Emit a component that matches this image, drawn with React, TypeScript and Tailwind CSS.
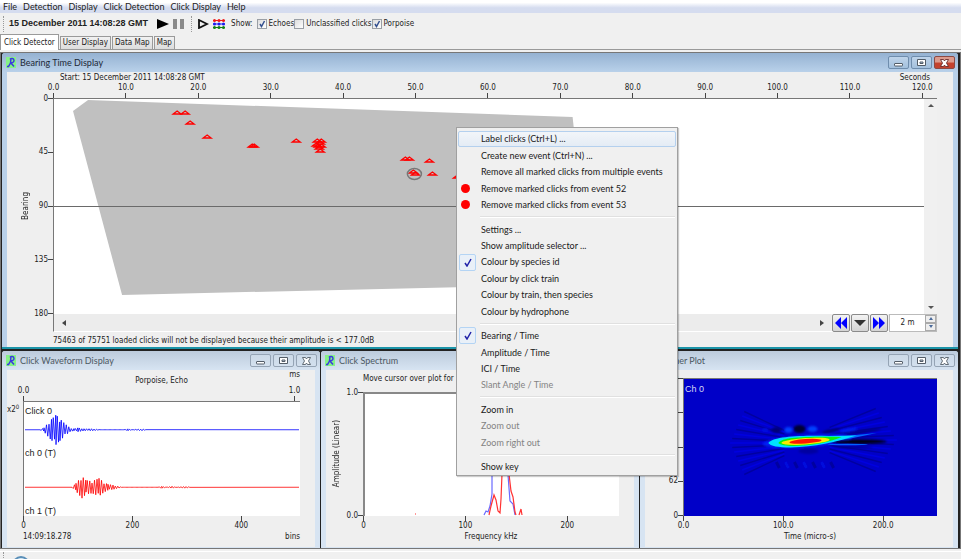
import { Fragment, type ReactNode } from 'react';
import clsx from 'clsx';

const MENUS = ['File', 'Detection', 'Display', 'Click Detection', 'Click Display', 'Help'];
const TABS = ['Click Detector', 'User Display', 'Data Map', 'Map'];
const SPECIES = [
  { name: 'Echoes', on: true },
  { name: 'Unclassified clicks', on: false },
  { name: 'Porpoise', on: true },
];

type MenuEntry = { label: string; checked?: boolean; dot?: boolean; disabled?: boolean; active?: boolean };

const POPUP: MenuEntry[][] = [
  [
    { label: 'Label clicks (Ctrl+L) ...', active: true },
    { label: 'Create new event (Ctrl+N) ...' },
    { label: 'Remove all marked clicks from multiple events' },
    { label: 'Remove marked clicks from event 52', dot: true },
    { label: 'Remove marked clicks from event 53', dot: true },
  ],
  [
    { label: 'Settings ...' },
    { label: 'Show amplitude selector ...' },
    { label: 'Colour by species id', checked: true },
    { label: 'Colour by click train' },
    { label: 'Colour by train, then species' },
    { label: 'Colour by hydrophone' },
  ],
  [
    { label: 'Bearing / Time', checked: true },
    { label: 'Amplitude / Time' },
    { label: 'ICI / Time' },
    { label: 'Slant Angle / Time', disabled: true },
  ],
  [
    { label: 'Zoom in' },
    { label: 'Zoom out', disabled: true },
    { label: 'Zoom right out', disabled: true },
  ],
  [{ label: 'Show key' }],
];

// base centre of every click triangle, in plot units
const CLICKS = [
  [123, 16], [131, 16], [136, 26], [153, 40], [198, 49], [200, 49], [242, 44],
  [263, 44], [266, 46], [264, 49], [267, 49], [262, 48], [265, 51], [266, 54], [267, 44],
  [351, 62], [355, 62], [375, 64], [359, 75], [361, 77], [378, 77], [403, 80],
];

// damped burst made of [position, amplitude] envelope points
const burst = (env: number[][], mid: number, width: number) => {
  let d = 'M1 ' + mid;
  let n = 0;
  for (let i = 0; i < env.length - 1; i++) {
    const [x0, a0] = env[i];
    const [x1, a1] = env[i + 1];
    for (let x = x0; x < x1; x += 1.25) {
      const amp = (a0 + ((a1 - a0) * (x - x0)) / (x1 - x0)) * (n % 5 === 3 ? 0.7 : 1);
      d += ' L' + x + ' ' + (mid + (n % 2 ? amp : -amp)).toFixed(1);
      n++;
    }
  }
  return d + ' L' + width + ' ' + mid;
};

const BLUE_WAVE = burst([[16, 0], [20, 2], [25, 8], [28, 11], [32, 15], [36, 11], [41, 6], [46, 2], [50, 1], [54, 2], [60, 1], [70, 1], [76, 0], [100, 0], [104, 1], [108, 0], [118, 1], [122, 0]], 28, 275);
const RED_WAVE = burst([[48, 0], [52, 4], [58, 11], [62, 7], [68, 6], [75, 9], [80, 5], [84, 3], [90, 2], [98, 0], [134, 0], [138, 1], [142, 0], [148, 1], [152, 0], [162, 1], [166, 0]], 86, 275);

function Logo() {
  return (
    <svg viewBox="0 0 10 11" className="h-[11px] w-[10px] shrink-0">
      <rect width="10" height="11" fill="#86f286" />
      <path d="M4 2.5 C5 1 8 1 8 3.500 C8 5.500 6 6 5 5.500 M5 1.500 L4.500 6 L2.500 9.500 L1 9.500 M5 6 L8 9.500" fill="none" stroke="#3a3ae0" strokeWidth="1.500" />
    </svg>
  );
}

function TitleButton({ kind, focused }: { kind: 'Minimise' | 'Maximise' | 'Close'; focused?: boolean }) {
  const red = focused && kind === 'Close';
  const ink = red ? '#6a2a2a' : '#535d68';
  return (
    <button
      aria-label={kind}
      className={clsx(
        'flex h-[13px] w-[21px] items-center justify-center rounded-[2px] border',
        red && 'border-[#8c4a44] bg-linear-to-b from-[#dc9a8c] from-45% to-[#c4422e] to-55%',
        focused && !red && 'border-[#6f8dad] bg-linear-to-b from-[#bfd4ea] to-[#a3c0dd]',
        !focused && 'border-[#95a4b5] bg-linear-to-b from-[#ccdae8] to-[#d3e0ee]',
      )}
    >
      <svg viewBox="0 0 9 8" className="h-2 w-[9px]" fill="#fff" stroke={ink}>
        {kind === 'Minimise' && <rect x="0.500" y="4.500" width="8" height="2.500" rx="0.500" />}
        {kind === 'Maximise' && <path d="M0.500 0.500H8.500V6.500H0.500Z M3 3H6V4.500H3Z" fillRule="evenodd" />}
        {kind === 'Close' && <path d="M0.500 0.500H3.500L4.500 2L5.500 0.500H8.500L6.500 4L8.500 7.500H5.500L4.500 6L3.500 7.500H0.500L2.500 4Z" strokeWidth="0.900" />}
      </svg>
    </button>
  );
}

function Frame({ title, focused, children }: { title: string; focused?: boolean; children: ReactNode }) {
  return (
    <section
      className={clsx(
        'flex min-w-0 flex-col rounded-t-[3px] px-[5px]',
        focused ? 'border-b-2 border-[#1b94a8] bg-[#b9d1ea]' : 'border-b border-[#d7e4f2] bg-[#d7e4f2]',
      )}
    >
      <header
        className={clsx(
          '-mx-[5px] flex h-[19px] items-center gap-1 rounded-t-[3px] pr-[3px] pl-1 font-[Lato,sans-serif] text-[9px]',
          focused ? 'bg-linear-to-b from-[#95b2d2] to-[#b9d1ea] text-[#1c2836]' : 'bg-linear-to-b from-[#bccbdc] to-[#d7e4f2] text-[#4c5863]',
        )}
      >
        <Logo />
        <h2 className="grow truncate">{title}</h2>
        <div className="flex gap-[2px]">
          <TitleButton kind="Minimise" focused={focused} />
          <TitleButton kind="Maximise" focused={focused} />
          <TitleButton kind="Close" focused={focused} />
        </div>
      </header>
      <div className="flex grow flex-col bg-[#efefef]">{children}</div>
    </section>
  );
}

function XAxis({ ticks, below, className }: { ticks: string[]; below?: boolean; className?: string }) {
  return (
    <div className={clsx('flex justify-between', className)}>
      {ticks.map((t) => (
        <div key={t} className={clsx('flex w-px items-center', below ? 'flex-col-reverse' : 'flex-col')}>
          <span className="leading-[10px] whitespace-nowrap">{t}</span>
          <span className="h-[5px] w-px bg-[#444]" />
        </div>
      ))}
    </div>
  );
}

function YAxis({ ticks, label, className = 'w-4' }: { ticks: string[]; label?: string; className?: string }) {
  return (
    <div className="flex h-full items-stretch">
      <div className={clsx('flex shrink-0 items-center justify-end', className)}>
        {label && <span className="rotate-180 whitespace-nowrap leading-[10px] [writing-mode:vertical-rl]">{label}</span>}
      </div>
      <div className="flex grow flex-col justify-between">
        {ticks.map((t) => (
          <div key={t} className="flex h-px items-center justify-end">
            <span className="leading-[10px]">{t}</span>
            <span className="h-px w-[5px] bg-[#444]" />
          </div>
        ))}
      </div>
    </div>
  );
}

function NavButton({ label, children }: { label: string; children: ReactNode }) {
  return (
    <button aria-label={label} className="flex h-[18px] w-[18px] items-center justify-center rounded-[2px] border border-[#8a8a8a] bg-linear-to-b from-[#f3f3f3] to-[#d4d4d4]">
      <svg viewBox="0 0 14 12" className="h-3 w-[14px]">{children}</svg>
    </button>
  );
}

function BearingTime() {
  return (
    <Frame title="Bearing Time Display" focused>
      <div className="grid grid-cols-[46px_1fr] pr-4">
        <div className="col-start-2 flex h-[11px] justify-between pr-[7px] pl-[7px] leading-[11px]">
          <span>Start: 15 December 2011 14:08:28 GMT</span>
          <span>Seconds</span>
        </div>
        <XAxis
          ticks={['0.0', '10.0', '20.0', '30.0', '40.0', '50.0', '60.0', '70.0', '80.0', '90.0', '100.0', '110.0', '120.0']}
          className="col-start-2 mr-[14px]"
        />
        <YAxis ticks={['0', '45', '90', '135', '180']} label="Bearing" className="w-6" />
        <div className="flex h-[216px] border-t border-l border-[#777] bg-white">
          <svg viewBox="0 0 869 215" preserveAspectRatio="none" className="h-full min-w-0 grow">
            <path d="M19 12L34 1L518 18L536 185L68 196Z" fill="#c0c0c0" />
            <path d="M0 107H869" stroke="#6a6a6a" strokeWidth="1" shapeRendering="crispEdges" />
            {CLICKS.map(([x, y], i) => (
              <path key={i} d={`M${x - 4} ${y - 1}L${x} ${y - 4}L${x + 4} ${y - 1}Z`} fill="none" stroke="#f00" strokeWidth="1.300" />
            ))}
            <ellipse cx="360" cy="75" rx="7" ry="5.500" fill="none" stroke="#777" strokeWidth="1.500" />
          </svg>
          <div className="flex w-[13px] shrink-0 flex-col items-center justify-between bg-[#f0f0f0] py-[5px]">
            <svg viewBox="0 0 6 4" className="h-1 w-[6px]"><path d="M3 0L6 3H0Z" fill="#555" /></svg>
            <svg viewBox="0 0 6 4" className="h-1 w-[6px]"><path d="M3 4L6 1H0Z" fill="#555" /></svg>
          </div>
        </div>
        <div className="col-start-2 flex h-[18px] items-center gap-px border-b border-l border-b-white border-l-[#777]">
          <div className="flex h-full grow items-center justify-between bg-[#ececec] pr-[7px] pl-2">
            <svg viewBox="0 0 4 6" className="h-[6px] w-1"><path d="M0 3L4 0V6Z" fill="#444" /></svg>
            <svg viewBox="0 0 4 6" className="h-[6px] w-1"><path d="M4 3L0 0V6Z" fill="#444" /></svg>
          </div>
          <NavButton label="Back"><path d="M7 0V12L1 6ZM13 0V12L7 6Z" fill="#00f" /></NavButton>
          <NavButton label="Options"><path d="M1 3H13L7 9Z" fill="#333" /></NavButton>
          <NavButton label="Forward"><path d="M1 0V12L7 6ZM7 0V12L13 6Z" fill="#00f" /></NavButton>
          <div className="flex h-[18px] w-12 items-center border border-[#bbb] bg-white">
            <input aria-label="Display length" defaultValue="2 m" className="w-0 grow bg-transparent text-center" />
            <div className="flex w-[11px] flex-col">
              <button aria-label="Longer" className="flex h-2 items-center justify-center border border-[#aaa] bg-[#eee]">
                <svg viewBox="0 0 4 3" className="h-[3px] w-1"><path d="M2 0L4 3H0Z" fill="#4a6a9a" /></svg>
              </button>
              <button aria-label="Shorter" className="flex h-2 items-center justify-center border border-[#aaa] bg-[#eee]">
                <svg viewBox="0 0 4 3" className="h-[3px] w-1"><path d="M2 3L4 0H0Z" fill="#4a6a9a" /></svg>
              </button>
            </div>
          </div>
        </div>
        <p className="col-start-2 h-[15px] truncate leading-[18px]">
          75463 of 75751 loaded clicks will not be displayed because their amplitude is &lt; 177.0dB
        </p>
      </div>
    </Frame>
  );
}

function Waveform() {
  return (
    <Frame title="Click Waveform Display">
      <div className="grid grid-cols-[16px_1fr] pr-[15px]">
        <div className="col-start-2 grid h-4 grid-cols-[1fr_auto_1fr] leading-[10px]">
          <span className="col-start-2 self-end">Porpoise, Echo</span>
          <span className="text-right">ms</span>
        </div>
        <XAxis ticks={['0.0', '1.0']} className="col-start-2 mr-[5px]" />
        <div className="pt-1 leading-[10px]">x2<sup>0</sup></div>
        <div className="grid h-[115px] border-t border-l border-[#777] bg-white">
          <svg viewBox="0 0 276 115" preserveAspectRatio="none" className="col-start-1 row-start-1 h-[114px] w-full">
            <path d={BLUE_WAVE} fill="none" stroke="#00f" strokeWidth="0.800" />
            <path d={RED_WAVE} fill="none" stroke="#f00" strokeWidth="0.800" />
          </svg>
          <div className="col-start-1 row-start-1 flex flex-col pt-1 pl-px font-['Liberation_Sans',sans-serif] text-[9px] leading-[10px]">
            <span>Click 0</span>
            <span className="mt-8">ch 0 (T)</span>
            <span className="mt-12">ch 1 (T)</span>
          </div>
        </div>
        <div className="col-start-2">
          <XAxis ticks={['0', '200', '400']} below className="w-[79%]" />
        </div>
        <div className="col-start-2 flex h-4 justify-between leading-[11px]">
          <span>14:09:18.278</span>
          <span>bins</span>
        </div>
      </div>
    </Frame>
  );
}

function Spectrum() {
  return (
    <Frame title="Click Spectrum">
      <div className="grid grid-cols-[37px_1fr] pr-[15px]">
        <p className="col-start-2 h-[22px] leading-[18px]">Move cursor over plot for</p>
        <YAxis ticks={['1.0', '0.0']} label="Amplitude (Linear)" />
        <div className="h-[124px] border-t-2 border-l-2 border-[#888] bg-white">
          <svg viewBox="0 0 254 122" preserveAspectRatio="none" className="size-full">
            <path d="M119 121L121 117L123 118L125 112L127 100V60L134 10L140 50L143 81L145 107L148 110L150 121" fill="none" stroke="#6a6aff" strokeWidth="1.200" />
            <path d="M124 121L126 112L129 101L131 106L133 117L135 119L136 105L137 80L140 20L144 80L146 97L148 103L150 118L151 121M154 121L156 115L157 121M50 120H51" fill="none" stroke="#f33" strokeWidth="1.200" />
          </svg>
        </div>
        <div className="col-start-2">
          <XAxis ticks={['0', '100', '200']} below className="w-[80%]" />
        </div>
        <p className="col-start-2 h-4 text-center leading-[11px]">Frequency kHz</p>
      </div>
    </Frame>
  );
}

// time-frequency energy blob over its fan of interference rays
function WignerImage() {
  const rays = Array.from({ length: 15 }, (_, i) => i - 7);
  return (
    <svg viewBox="0 0 252 137" preserveAspectRatio="none" className="col-start-1 row-start-1 h-[137px] w-full">
      <defs>
        <filter id="soft" x="-20%" y="-50%" width="140%" height="200%"><feGaussianBlur stdDeviation="1.200" /></filter>
        <filter id="faint" x="-20%" y="-50%" width="140%" height="200%"><feGaussianBlur stdDeviation="0.600" /></filter>
      </defs>
      <rect width="252" height="137" fill="#0000c8" />
      <g filter="url(#faint)" fill="none" strokeWidth="1.400">
        {rays.map((r) => (
          <path
            key={r}
            d={`M145 ${61 + r * 1.8}L${212 - Math.abs(r) * 3} ${61 + r * 4.5}M100 ${64 + r * 1.8}L${46 + Math.abs(r) * 2} ${64 + r * 4.5}`}
            stroke={r % 2 ? '#0000a0' : '#0000e0'}
          />
        ))}
        {[0, 1, 2, 3, 4, 5, 6].map((i) => (
          <path key={i} d={`M${92 + i * 9} 83L${95 + i * 9} 89`} stroke={i % 2 ? '#0008dc' : '#0000a0'} strokeWidth="3" />
        ))}
      </g>
      <g filter="url(#soft)">
        <ellipse cx="81" cy="51" rx="3" ry="2" fill="#0010e0" />
        <ellipse cx="92" cy="51" rx="5" ry="3" fill="#000078" />
        <ellipse cx="104" cy="51" rx="4" ry="3" fill="#0040ff" />
        <ellipse cx="115" cy="50" rx="6" ry="4" fill="#000030" />
        <ellipse cx="128" cy="50" rx="5" ry="3" fill="#0040ff" />
        <ellipse cx="146" cy="52" rx="9" ry="2" fill="#000080" transform="rotate(-12 146 52)" />
        <ellipse cx="164" cy="51" rx="9" ry="1.500" fill="#0020f0" transform="rotate(-10 164 51)" />
        <ellipse cx="177" cy="53" rx="20" ry="1.500" fill="#000080" transform="rotate(-9 177 53)" />
        <ellipse cx="124" cy="72" rx="10" ry="3" fill="#0000a0" />
        <ellipse cx="122" cy="62" rx="44" ry="6" fill="#0020f4" transform="rotate(-4 122 62)" />
        <ellipse cx="174" cy="62.500" rx="28" ry="2.200" fill="#000010" />
        <ellipse cx="168" cy="68" rx="20" ry="1" fill="#000088" />
      </g>
      <g filter="url(#faint)">
        <ellipse cx="163" cy="65.500" rx="20" ry="0.800" fill="#0060ff" />
        <path d="M140 59L192 54L166 59.500L140 63Z" fill="#0068ff" />
        <path d="M84 64C90 57 118 56.500 144 57L172 56.500C152 63 130 68 106 68.500C94 68.500 86 67 84 64Z" fill="#00e0ff" />
        <path d="M94 64C98 58 120 57.500 157 58C146 63 126 67 109 67C101 67 96 66 94 64Z" fill="#10f010" />
        <ellipse cx="121" cy="62.300" rx="24" ry="3.200" fill="#ffe800" transform="rotate(-4 121 62)" />
        <ellipse cx="121" cy="62.300" rx="16" ry="2.200" fill="#ff1800" transform="rotate(-4 121 62)" />
      </g>
    </svg>
  );
}

function Wigner() {
  return (
    <Frame title="Wigner Plot">
      <div className="grid grid-cols-[38px_1fr] pt-2 pr-4">
        <YAxis ticks={['250', '187', '125', '62', '0']} />
        <div className="grid h-[138px] border-t border-l border-[#777] bg-[#0000c8]">
          <WignerImage />
          <span className="col-start-1 row-start-1 pt-[5px] pl-px font-['Liberation_Sans',sans-serif] text-[9px] leading-[10px] text-[#d8d8f4]">Ch 0</span>
        </div>
        <div className="col-start-2">
          <XAxis ticks={['0.0', '100.0', '200.0']} below className="w-[79%]" />
        </div>
        <p className="col-start-2 h-4 text-center leading-[11px]">Time (micro-s)</p>
      </div>
    </Frame>
  );
}

function PopupMenu() {
  return (
    <div
      role="menu"
      className="absolute top-[127px] left-[456px] flex h-[349px] w-[222px] flex-col border border-[#a0a0a0] bg-[#f0f0f0] px-px pt-[3px] font-[Lato,sans-serif] text-[9px] text-[#1a1a1a] shadow-[1px_1px_1px_#0003]"
    >
      {POPUP.map((group, g) => (
        <Fragment key={g}>
          {g > 0 && (
            <div className="flex h-2 shrink-0 items-center pr-px pl-[22px]">
              <hr className="h-[2px] grow border-t border-b border-t-[#e0e0e0] border-b-white" />
            </div>
          )}
          {group.map((item) => (
            <button
              key={item.label}
              role="menuitem"
              disabled={item.disabled}
              className={clsx(
                'flex min-h-0 flex-1 items-center rounded-[2px] border text-left',
                item.active ? 'border-[#b4d0ee] bg-linear-to-b from-[#f2f5f9] to-[#e4ecf5]' : 'border-transparent',
                item.disabled && 'text-[#838383]',
              )}
            >
              <span className="flex w-[22px] shrink-0 items-center self-stretch">
                {item.dot && <span className="ml-[2px] size-[9px] rounded-full bg-[#f00]" />}
                {item.checked && (
                  <span className="flex size-[17px] items-center justify-center rounded-[2px] border border-[#b4d4f4] bg-[#e9f0f8]">
                    <svg viewBox="0 0 8 9" className="h-[9px] w-2"><path d="M1 5L3 8L7 1" fill="none" stroke="#2222a8" strokeWidth="1.500" /></svg>
                  </span>
                )}
              </span>
              <span className="whitespace-nowrap">{item.label}</span>
            </button>
          ))}
        </Fragment>
      ))}
    </div>
  );
}

function Grip() {
  return <span className="h-4 border-l border-dotted border-[#999]" />;
}

function Toolbar() {
  return (
    <div className="flex h-[21px] shrink-0 items-center pl-[3px]">
      <Grip />
      <span className="ml-[5px] font-['Liberation_Sans',sans-serif] text-[9px] font-bold">15 December 2011 14:08:28 GMT</span>
      <button aria-label="Start" className="ml-[9px]">
        <svg viewBox="0 0 12 10" className="h-[10px] w-3"><path d="M0 0L12 5L0 10Z" fill="#000" /></svg>
      </button>
      <button aria-label="Pause" className="ml-1">
        <svg viewBox="0 0 11 10" className="h-[10px] w-[11px]"><path d="M0 0H4V10H0ZM7 0H11V10H7Z" fill="#8a8a8a" /></svg>
      </button>
      <span className="w-[7px]" />
      <Grip />
      <button aria-label="Play clicks" className="ml-[6px]">
        <svg viewBox="0 0 11 10" className="h-[10px] w-[11px]"><path d="M1 1L9 5L1 9Z" fill="none" stroke="#111" strokeWidth="1.800" /></svg>
      </button>
      <button aria-label="Clip colours" className="ml-1">
        <svg viewBox="0 0 12 10" className="h-[10px] w-3">
          {['#f01818', '#1c1cf0', '#108010'].map((c, r) => (
            <Fragment key={c}>
              <path d={`M0 ${1.5 + r * 3.5}H12`} stroke={c} strokeWidth="1" />
              {[1.5, 6, 10.5].map((x) => <circle key={x} cx={x} cy={1.5 + r * 3.5} r="1.500" fill={c} />)}
            </Fragment>
          ))}
        </svg>
      </button>
      <span className="ml-[6px]">Show:</span>
      <div className="ml-1 flex">
        {SPECIES.map((s) => (
          <label key={s.name} className="flex items-center gap-[2px]">
            <span className="grid size-[10px] place-items-center">
              <input type="checkbox" defaultChecked={s.on} className="peer col-start-1 row-start-1 size-[10px] appearance-none border border-[#9a9fa5] bg-linear-to-br from-[#dcdcdc] to-white" />
              <svg viewBox="0 0 8 8" className="pointer-events-none col-start-1 row-start-1 hidden size-2 peer-checked:block">
                <path d="M2 4L3.500 6.500L6.500 1" fill="none" stroke="#33508f" strokeWidth="1.500" />
              </svg>
            </span>
            {s.name}
          </label>
        ))}
      </div>
    </div>
  );
}

export default function App() {
  return (
    <div className="relative flex h-screen flex-col overflow-hidden bg-[#f0f0f0] font-['DejaVu_Sans_Condensed','DejaVu_Sans',sans-serif] text-[8px] text-[#222]">
      <nav className="flex h-[13px] shrink-0 items-center gap-[6px] bg-linear-to-b from-white from-20% to-[#d5dcef] to-60% pl-[3px] font-[Lato,sans-serif] text-[9px]">
        {MENUS.map((m) => <button key={m}>{m}</button>)}
      </nav>
      <Toolbar />
      <div role="tablist" className="flex h-4 shrink-0 items-end gap-px border-b border-[#9a9a9a]">
        {TABS.map((t, i) => (
          <button
            key={t}
            role="tab"
            aria-selected={i === 0}
            className={clsx(
              'border border-b-0 border-[#9a9a9a]',
              i === 0 ? '-mb-px h-4 bg-white px-[3px]' : 'h-[13px] bg-linear-to-b from-[#f2f2f2] to-[#dcdcdc] px-[2px]',
            )}
          >
            {t}
          </button>
        ))}
      </div>
      <main className="mt-[2px] flex shrink-0 flex-col gap-[2px] border border-[#777] bg-[#222] pr-[2px] pl-px">
        <BearingTime />
        <div className="grid grid-cols-3 gap-px">
          <Waveform />
          <Spectrum />
          <Wigner />
        </div>
      </main>
      <footer className="mt-[2px] flex h-6 shrink-0 items-start gap-2 border-t border-[#fff] pl-[3px]">
        <Grip />
        <svg viewBox="0 0 18 18" className="mt-[4px] size-[18px]"><circle cx="9" cy="9" r="8" fill="#d4e6f4" stroke="#5a8fb8" strokeWidth="2" /></svg>
      </footer>
      <PopupMenu />
    </div>
  );
}
